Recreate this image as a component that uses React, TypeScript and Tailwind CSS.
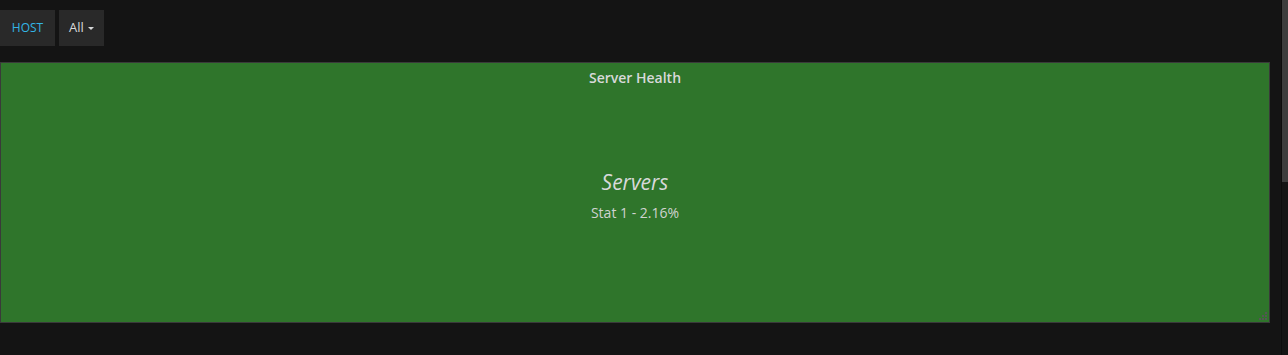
import React from 'react';

const App = () => {
  return (
    <div
      className="flex h-[355px] w-[1288px] bg-[#141414] text-[#d8d9da]"
      style={{ fontFamily: '"Open Sans", "Liberation Sans", sans-serif' }}
    >
      <div className="flex flex-1 flex-col pr-[11px]">
        {/* template variables */}
        <div className="flex gap-1 pt-[10px]">
          <div className="flex h-9 w-[55px] items-center justify-center bg-[#292929] text-[12px] text-[#33b5e5]">HOST</div>
          <div className="flex h-9 w-[45px] items-center justify-center gap-1 bg-[#292929] text-[13px] text-[#d8d9da]">
            All
            <span className="mt-[1px] h-0 w-0 border-x-[3px] border-t-[3px] border-x-transparent border-t-[#d8d9da]" />
          </div>
        </div>

        {/* panel */}
        <div className="relative mt-4 flex h-[261px] flex-col border border-[#3a3a3a] bg-[#2f752b]">
          <div className="pt-[5px] text-center text-[14px] font-semibold leading-[20px]">Server Health</div>
          <div className="flex flex-1 flex-col items-center pt-[80px]">
            <div className="text-[21px] italic leading-[28px]">Servers</div>
            <div className="mt-[8px] text-[14px] leading-[18px] text-[#d0d3d0]">Stat 1 - 2.16%</div>
          </div>
          <svg className="absolute bottom-[1px] right-[1px]" width="9" height="9" viewBox="0 0 9 9">
            <rect x="6" y="0" width="2" height="2" fill="#555" />
            <rect x="3" y="3" width="2" height="2" fill="#555" />
            <rect x="6" y="3" width="2" height="2" fill="#555" />
            <rect x="0" y="6" width="2" height="2" fill="#555" />
            <rect x="3" y="6" width="2" height="2" fill="#555" />
            <rect x="6" y="6" width="2" height="2" fill="#555" />
          </svg>
        </div>
      </div>

      {/* scrollbar */}
      <div className="flex w-[7px] flex-col border-l border-[#0c0c0c]">
        <div className="h-[182px] bg-[#3d3d3d]" />
      </div>
    </div>
  );
};

export default App;
